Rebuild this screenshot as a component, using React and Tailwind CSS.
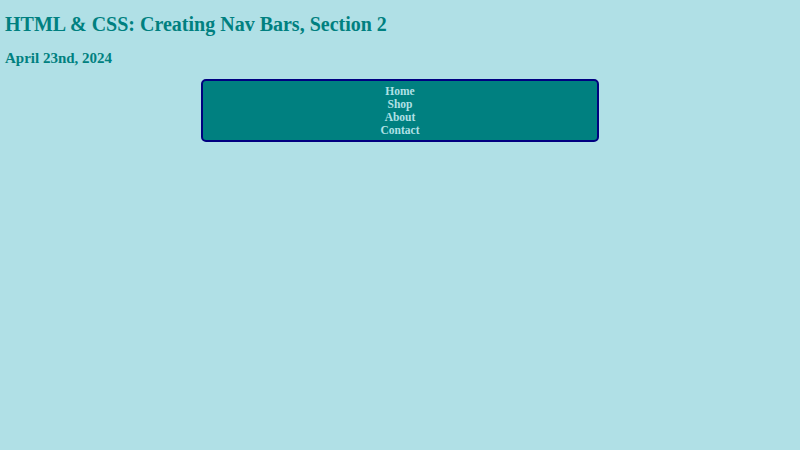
export default function App() {
  const links = ["Home", "Shop", "About", "Contact"];
  return (
    <div className="min-h-screen bg-[#b0e0e6] px-[5px] py-[13px] font-['Liberation_Serif',serif] text-[#008080]">
      <h1 className="text-[20px] font-bold leading-[23px]">HTML &amp; CSS: Creating Nav Bars, Section 2</h1>
      <h3 className="mt-[13px] text-[15px] font-bold leading-[18px]">April 23nd, 2024</h3>
      <nav className="mx-auto mt-[12px] w-[398px] rounded-[5px] border-2 border-[#000080] bg-[#008080] pt-[4px] pb-[3px]">
        <ul className="flex flex-col items-center">
          {links.map((l) => (
            <li key={l} className="text-[11.5px] leading-[13px]">
              <a href="#" className="font-bold text-[#b0e0e6]">{l}</a>
            </li>
          ))}
        </ul>
      </nav>
    </div>
  );
}
